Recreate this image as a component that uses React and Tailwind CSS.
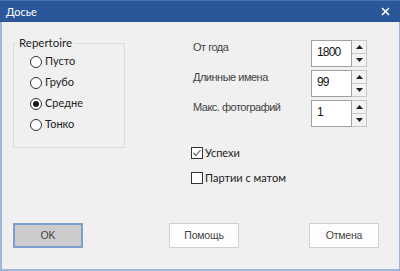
import React from "react";

function Radio({ label, checked }) {
  return (
    <label className="flex items-center h-[21px] pl-[13px] gap-[3px] text-[11px] text-[#222]">
      <span className="w-[12px] h-[12px] rounded-full border border-[#333333] bg-white flex items-center justify-center">
        {checked && <span className="w-[6px] h-[6px] rounded-full bg-[#1a1a1a]" />}
      </span>
      {label}
    </label>
  );
}

function Spinner({ value }) {
  return (
    <div className="flex h-[27px] w-[56px]">
      <div className="flex-1 bg-white border border-[#a0a0a0] pl-[5px] pt-[4px] text-[12px] leading-[14px] tracking-[-0.8px] text-[#111] font-['Liberation_Sans',sans-serif]">
        {value}
      </div>
      <div className="w-[15px] flex flex-col border border-l-0 border-[#c8c8c8] bg-[#f3f3f3]">
        <div className="flex-1 flex items-center justify-center border-b border-[#c8c8c8]">
          <svg width="7" height="4" viewBox="0 0 7 4"><path d="M0 4 L3.5 0 L7 4 Z" fill="#222" /></svg>
        </div>
        <div className="flex-1 flex items-center justify-center">
          <svg width="7" height="4" viewBox="0 0 7 4"><path d="M0 0 L3.5 4 L7 0 Z" fill="#222" /></svg>
        </div>
      </div>
    </div>
  );
}

function Check({ label, checked }) {
  return (
    <label className="flex items-center h-[20px] gap-[2px] text-[11px] text-[#222]">
      <span className="w-[12px] h-[12px] border border-[#333333] bg-white flex items-center justify-center">
        {checked && (
          <svg width="10" height="10" viewBox="0 0 10 10">
            <path d="M1.5 5 L4 7.5 L8.5 2" fill="none" stroke="#555" strokeWidth="1.1" />
          </svg>
        )}
      </span>
      {label}
    </label>
  );
}

function Btn({ children, primary, className }) {
  return (
    <button
      className={
        "w-[70px] h-[25px] text-[10.5px] tracking-[-0.2px] text-[#444] font-['Liberation_Sans',sans-serif] " +
        (primary ? "bg-[#cccccc] border-2 border-[#7c9fcf] " : "bg-[#fdfdfd] border border-[#cfcfcf] ") +
        (className || "")
      }
    >
      {children}
    </button>
  );
}

export default function App() {
  return (
    <div className="w-[400px] h-[271px] flex flex-col bg-[#f0f0f0] font-['Lato','Liberation_Sans',sans-serif]">
      <div className="h-[22px] bg-[#2b579a] border-t border-[#4a72b0] flex items-center justify-between pl-[6px] pr-[10px]">
        <span className="text-white text-[11px] leading-none">Досье</span>
        <svg width="9" height="9" viewBox="0 0 9 9">
          <path d="M1 1 L8 8 M8 1 L1 8" stroke="white" strokeWidth="1.6" />
        </svg>
      </div>
      <div className="flex-1 flex flex-col border-l-2 border-r border-b-2 border-[#9cb6dc]">
        <div className="flex items-start pt-[13px]">
          <fieldset className="ml-[11px] w-[112px] h-[113px] border border-[#dcdcdc] px-[3px] pb-[10px]">
            <legend className="px-[2px] text-[11.5px] leading-[16px] text-[#222]">Repertoire</legend>
            <Radio label="Пусто" />
            <Radio label="Грубо" />
            <Radio label="Средне" checked />
            <Radio label="Тонко" />
          </fieldset>
          <div className="ml-[66px] mt-[5px] flex flex-col">
            <div className="flex flex-col gap-[3px]">
              {[
                ["От года", "1800"],
                ["Длинные имена", "99"],
                ["Макс. фотографий", "1"],
              ].map(([l, v]) => (
                <div key={l} className="flex">
                  <span className="w-[120px] pl-[2px] text-[11px] leading-[14px] tracking-[-0.5px] text-[#444] font-['Liberation_Sans',sans-serif]">{l}</span>
                  <Spinner value={v} />
                </div>
              ))}
            </div>
            <div className="mt-[16px] flex flex-col gap-[5px]">
              <Check label="Успехи" checked />
              <Check label="Партии с матом" />
            </div>
          </div>
        </div>
        <div className="mt-auto mb-[21px] flex ml-[11px]">
          <Btn primary>OK</Btn>
          <Btn className="ml-[86px]">Помощь</Btn>
          <Btn className="ml-[70px]">Отмена</Btn>
        </div>
      </div>
    </div>
  );
}
